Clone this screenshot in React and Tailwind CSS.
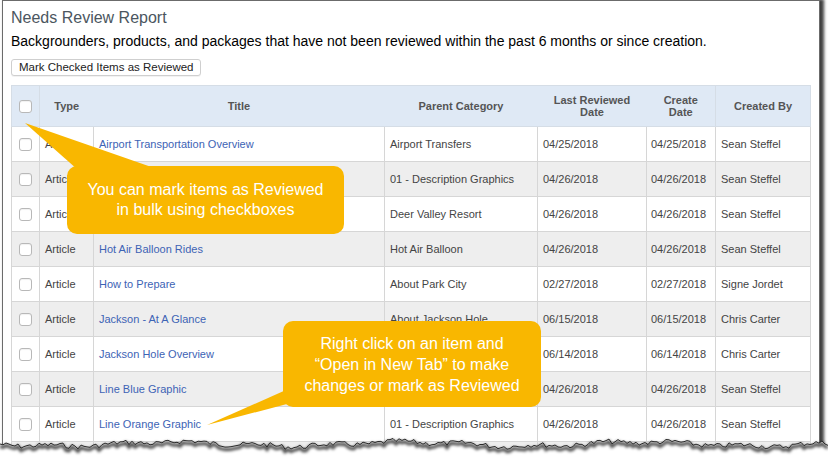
import React from "react";

const rows = [
  ["Airport Transportation Overview", "Airport Transfers", "04/25/2018", "04/25/2018", "Sean Steffel"],
  ["Airport Transportation Overview", "01 - Description Graphics", "04/26/2018", "04/26/2018", "Sean Steffel"],
  ["Deer Valley Resort", "Deer Valley Resort", "04/26/2018", "04/26/2018", "Sean Steffel"],
  ["Hot Air Balloon Rides", "Hot Air Balloon", "04/26/2018", "04/26/2018", "Sean Steffel"],
  ["How to Prepare", "About Park City", "02/27/2018", "02/27/2018", "Signe Jordet"],
  ["Jackson - At A Glance", "About Jackson Hole", "06/15/2018", "06/15/2018", "Chris Carter"],
  ["Jackson Hole Overview", "About Jackson Hole", "06/14/2018", "06/14/2018", "Chris Carter"],
  ["Line Blue Graphic", "01 - Description Graphics", "04/26/2018", "04/26/2018", "Sean Steffel"],
  ["Line Orange Graphic", "01 - Description Graphics", "04/26/2018", "04/26/2018", "Sean Steffel"],
  ["", "", "", "", ""],
];

const Box = () => (
  <span className="block w-[13px] h-[13px] mx-auto bg-white border border-[#b8b8b8] rounded-[3px] shadow-[inset_0_1px_1px_rgba(0,0,0,0.06)]" />
);

// jagged torn-paper edge along the bottom
function tornPath() {
  let seed = 7;
  const rnd = () => {
    seed = (seed * 9301 + 49297) % 233280;
    return seed / 233280;
  };
  const pts = [];
  for (let x = 0; x <= 828; x += 3) {
    const base = 444 + Math.sin(x / 37) * 2 + Math.sin(x / 11) * 1.2;
    pts.push([x, base + (rnd() - 0.5) * 5]);
  }
  return pts;
}

function TornEdge() {
  const pts = tornPath();
  const line = pts.map((p, i) => `${i ? "L" : "M"}${p[0]},${p[1].toFixed(1)}`).join(" ");
  const fill = `${line} L828,463 L0,463 Z`;
  return (
    <svg className="absolute left-0 top-0 pointer-events-none" width="828" height="463">
      <defs>
        <filter id="blur" x="-5%" y="-50%" width="110%" height="200%">
          <feGaussianBlur stdDeviation="1.6" />
        </filter>
      </defs>
      <path d={fill} fill="#ffffff" />
      <path d={line} transform="translate(0,2.5)" fill="none" stroke="#000" strokeOpacity="0.75" strokeWidth="3" filter="url(#blur)" />
      <path d={line} fill="none" stroke="#2a2a2a" strokeWidth="1" />
    </svg>
  );
}

export default function App() {
  return (
    <div className="relative w-[828px] h-[463px] overflow-hidden bg-white" style={{ fontFamily: '"Liberation Sans", Arial, sans-serif' }}>
      <div className="ml-[2px] w-[818px] h-[452px] border-l border-t border-r border-[#6b6b6b] bg-white shadow-[3px_0_3px_1px_rgba(0,0,0,0.75)] px-[8px] pt-[6px]">
        <h1 className="text-[16px] leading-[22px] text-[#4b5660]">Needs Review Report</h1>
        <p className="mt-[3px] text-[14px] leading-[18px] text-black">
          Backgrounders, products, and packages that have not been reviewed within the past 6 months or since creation.
        </p>
        <button className="mt-[9px] h-[17px] px-[7px] text-[11.5px] leading-[15px] text-[#222] bg-white border border-[#cfcfcf] rounded-[3px] shadow-[0_1px_0_rgba(0,0,0,0.05)]">
          Mark Checked Items as Reviewed
        </button>
        <table className="mt-[7px] w-[799px] table-fixed border-collapse text-[11px] text-[#444]">
          <colgroup>
            <col className="w-[28px]" />
            <col className="w-[54px]" />
            <col className="w-[291px]" />
            <col className="w-[153px]" />
            <col className="w-[109px]" />
            <col className="w-[69px]" />
            <col className="w-[95px]" />
          </colgroup>
          <thead>
            <tr className="bg-[#dfe9f5] h-[41px] text-[#555] font-bold leading-[12px]">
              <th className="border border-[#d5dde6] font-bold"><Box /></th>
              <th className="border-y border-[#d5dde6] font-bold text-center">Type</th>
              <th className="border-y border-[#d5dde6] font-bold text-center">Title</th>
              <th className="border-y border-[#d5dde6] font-bold text-center">Parent Category</th>
              <th className="border-y border-[#d5dde6] font-bold text-center">Last Reviewed<br />Date</th>
              <th className="border-y border-[#d5dde6] font-bold text-center">Create<br />Date</th>
              <th className="border border-[#d5dde6] font-bold text-center">Created By</th>
            </tr>
          </thead>
          <tbody>
            {rows.map((r, i) => (
              <tr key={i} className={`h-[35px] ${i % 2 ? "bg-[#eeeeee]" : "bg-white"}`}>
                <td className="border border-[#d6d6d6]">{r[0] && <Box />}</td>
                <td className="border border-[#d6d6d6] px-[5px]">{r[0] && "Article"}</td>
                <td className="border border-[#d6d6d6] px-[5px] text-[#3d63b5] whitespace-nowrap">{r[0]}</td>
                <td className="border border-[#d6d6d6] px-[5px] whitespace-nowrap">{r[1]}</td>
                <td className="border border-[#d6d6d6] px-[5px]">{r[2]}</td>
                <td className="border border-[#d6d6d6] px-[4px]">{r[3]}</td>
                <td className="border border-[#d6d6d6] px-[5px] whitespace-nowrap">{r[4]}</td>
              </tr>
            ))}
          </tbody>
        </table>
      </div>

      {/* callout pointers */}
      <svg className="absolute left-0 top-0 pointer-events-none" width="828" height="463">
        <polygon points="25,123 78,170 160,170" fill="#f9b700" />
        <polygon points="207,425 286,390 302,400" fill="#f9b700" />
      </svg>

      <div className="absolute left-[67px] top-[166px] w-[277px] h-[68px] rounded-[10px] bg-[#f9b700] flex flex-col items-center justify-center text-white text-[16px] leading-[20px]">
        <span>You can mark items as Reviewed</span>
        <span>in bulk using checkboxes</span>
      </div>

      <div className="absolute left-[283px] top-[321px] w-[258px] h-[86px] rounded-[10px] bg-[#f9b700] flex flex-col items-center justify-center text-white text-[16px] leading-[21px]">
        <span>Right click on an item and</span>
        <span>“Open in New Tab” to make</span>
        <span>changes or mark as Reviewed</span>
      </div>

      <TornEdge />
    </div>
  );
}
